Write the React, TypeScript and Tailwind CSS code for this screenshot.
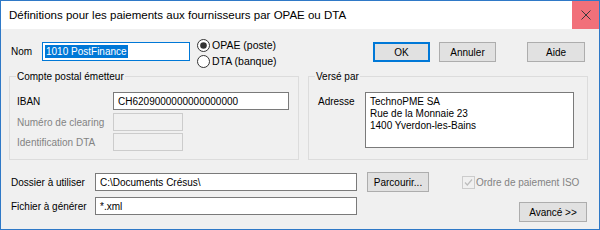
import React from "react";

const ui = "font-['Liberation_Sans',Arial,sans-serif]";

function Radio({ checked, label }: { checked?: boolean; label: string }) {
  return (
    <div className="flex items-center h-[16px]">
      <svg width="13" height="13" viewBox="0 0 13 13" className="shrink-0">
        <circle cx="6.5" cy="6.5" r="6" fill="#ffffff" stroke="#333333" strokeWidth="1" />
        {checked && <circle cx="6.5" cy="6.5" r="3.3" fill="#333333" />}
      </svg>
      <span className="ml-[2px] text-[10.5px] leading-[13px]">{label}</span>
    </div>
  );
}

function Button({ label, className, primary }: { label: string; className: string; primary?: boolean }) {
  return (
    <button
      className={
        "flex items-center justify-center bg-[#e1e1e1] text-[10px] leading-[13px] " +
        (primary ? "border-2 border-[#0078d7] " : "border border-[#adadad] ") +
        className
      }
    >
      {label}
    </button>
  );
}

function Field({ value, className, disabled }: { value?: string; className: string; disabled?: boolean }) {
  return (
    <div
      className={
        "flex items-center pl-[4px] text-[10px] leading-[13px] " +
        (disabled ? "border border-[#cccccc] bg-[#f0f0f0] " : "border border-[#7a7a7a] bg-white ") +
        className
      }
    >
      {value}
    </div>
  );
}

export default function App() {
  return (
    <div className={"w-[600px] h-[230px] border border-[#2f79c7] bg-[#f0f0f0] flex flex-col text-black " + ui}>
      {/* barre de titre */}
      <div className="h-[28px] bg-white flex items-center shrink-0">
        <span className="flex-1 pl-[8px] text-[11.5px] leading-[14px]">
          Définitions pour les paiements aux fournisseurs par OPAE ou DTA
        </span>
        <div className="w-[27px] h-[28px] bg-[#f1707a] flex items-center justify-center">
          <svg width="10" height="10" viewBox="0 0 10 10">
            <path d="M0.5 0.5 L9.5 9.5 M9.5 0.5 L0.5 9.5" stroke="#3a3a3a" strokeWidth="1" />
          </svg>
        </div>
      </div>

      {/* Nom / type / boutons */}
      <div className="flex items-start mt-[8px]">
        <div className="ml-[10px] w-[31px] h-[19px] mt-[5px] flex items-center text-[10px]">Nom</div>
        <div className="w-[148px] h-[19px] mt-[5px] border border-[#0078d7] bg-white flex items-center pl-[2px]">
          <span className="bg-[#0078d7] text-white text-[10px] leading-[13px] px-[1px]">1010 PostFinance</span>
        </div>
        <div className="ml-[7px] w-[176px] flex flex-col">
          <Radio checked label="OPAE (poste)" />
          <Radio label="DTA (banque)" />
        </div>
        <Button primary label="OK" className="w-[57px] h-[20px] mt-[5px]" />
        <Button label="Annuler" className="w-[57px] h-[20px] mt-[5px] ml-[9px]" />
        <Button label="Aide" className="w-[58px] h-[20px] mt-[5px] ml-[31px]" />
      </div>

      {/* groupes */}
      <div className="flex mt-[1px]">
        <fieldset className="ml-[8px] w-[290px] h-[90px] border border-[#dcdcdc] pl-[6px]">
          <legend className="px-[1px] text-[10px] leading-[13px]">Compte postal émetteur</legend>
          <div className="ml-[1px] mt-[9px] flex items-center h-[18px]">
            <span className="w-[96px] text-[10px]">IBAN</span>
            <Field value="CH6209000000000000000" className="w-[176px] h-[18px]" />
          </div>
          <div className="ml-[1px] mt-[3px] flex items-center h-[18px]">
            <span className="w-[96px] text-[10px] text-[#838383]">Numéro de clearing</span>
            <Field disabled className="w-[70px] h-[18px]" />
          </div>
          <div className="ml-[1px] mt-[2px] flex items-center h-[18px]">
            <span className="w-[96px] text-[10px] text-[#838383]">Identification DTA</span>
            <Field disabled className="w-[70px] h-[18px]" />
          </div>
        </fieldset>

        <fieldset className="ml-[9px] w-[280px] h-[90px] border border-[#dcdcdc] pl-[6px]">
          <legend className="px-[1px] text-[10px] leading-[13px]">Versé par</legend>
          <div className="ml-[3px] mt-[9px] flex items-start">
            <span className="w-[47px] mt-[3px] text-[10px] leading-[13px]">Adresse</span>
            <div className="w-[209px] h-[56px] border border-[#7a7a7a] bg-white pl-[4px] pt-[3px] text-[10px] leading-[12px]">
              <div>TechnoPME SA</div>
              <div>Rue de la Monnaie 23</div>
              <div>1400 Yverdon-les-Bains</div>
            </div>
          </div>
        </fieldset>
      </div>

      {/* dossier */}
      <div className="flex items-center h-[20px] mt-[12px]">
        <span className="ml-[10px] w-[84px] text-[10px]">Dossier à utiliser</span>
        <Field value="C:\Documents Crésus\" className="w-[262px] h-[18px]" />
        <Button label="Parcourir..." className="w-[62px] h-[20px] ml-[10px]" />
        <div className="ml-[33px] flex items-center">
          <svg width="13" height="13" viewBox="0 0 13 13" className="shrink-0">
            <rect x="0.5" y="0.5" width="12" height="12" fill="#f0f0f0" stroke="#cccccc" />
            <path d="M3 6.5 L5.3 9 L10 3.5" fill="none" stroke="#bcbcbc" strokeWidth="1.2" />
          </svg>
          <span className="ml-[1px] text-[10px] text-[#838383]">Ordre de paiement ISO</span>
        </div>
      </div>

      {/* fichier */}
      <div className="flex items-start mt-[5px]">
        <span className="ml-[10px] w-[84px] h-[18px] flex items-center text-[10px]">Fichier à générer</span>
        <Field value="*.xml" className="w-[262px] h-[18px]" />
        <Button label="Avancé >>" className="w-[68px] h-[20px] mt-[5px] ml-auto mr-[12px]" />
      </div>
    </div>
  );
}
